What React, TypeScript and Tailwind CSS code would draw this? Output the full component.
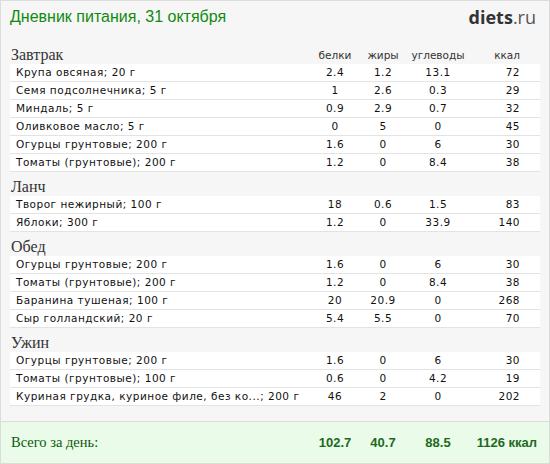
import React from "react";

type Item = { name: string; p: string; f: string; c: string; k: string };

const meals: { title: string; items: Item[] }[] = [
  {
    title: "Завтрак",
    items: [
      { name: "Крупа овсяная; 20 г", p: "2.4", f: "1.2", c: "13.1", k: "72" },
      { name: "Семя подсолнечника; 5 г", p: "1", f: "2.6", c: "0.3", k: "29" },
      { name: "Миндаль; 5 г", p: "0.9", f: "2.9", c: "0.7", k: "32" },
      { name: "Оливковое масло; 5 г", p: "0", f: "5", c: "0", k: "45" },
      { name: "Огурцы грунтовые; 200 г", p: "1.6", f: "0", c: "6", k: "30" },
      { name: "Томаты (грунтовые); 200 г", p: "1.2", f: "0", c: "8.4", k: "38" },
    ],
  },
  {
    title: "Ланч",
    items: [
      { name: "Творог нежирный; 100 г", p: "18", f: "0.6", c: "1.5", k: "83" },
      { name: "Яблоки; 300 г", p: "1.2", f: "0", c: "33.9", k: "140" },
    ],
  },
  {
    title: "Обед",
    items: [
      { name: "Огурцы грунтовые; 200 г", p: "1.6", f: "0", c: "6", k: "30" },
      { name: "Томаты (грунтовые); 200 г", p: "1.2", f: "0", c: "8.4", k: "38" },
      { name: "Баранина тушеная; 100 г", p: "20", f: "20.9", c: "0", k: "268" },
      { name: "Сыр голландский; 20 г", p: "5.4", f: "5.5", c: "0", k: "70" },
    ],
  },
  {
    title: "Ужин",
    items: [
      { name: "Огурцы грунтовые; 200 г", p: "1.6", f: "0", c: "6", k: "30" },
      { name: "Томаты (грунтовые); 100 г", p: "0.6", f: "0", c: "4.2", k: "19" },
      { name: "Куриная грудка, куриное филе, без ко...; 200 г", p: "46", f: "2", c: "0", k: "202" },
    ],
  },
];

const grid = "grid grid-cols-[305px_40px_56px_54px_72px]";

const App = () => {
  return (
    <div className="w-[550px] h-[464px] border border-[#dcdcdc] bg-[#f6f6f6] flex flex-col font-['DejaVu_Sans',sans-serif]">
      <div className="h-[39px] flex justify-between items-start px-[9px] pt-[5px]">
        <h1 className="font-['Liberation_Sans',sans-serif] text-[16px] leading-[22px] text-[#118a11]">
          Дневник питания, 31 октября
        </h1>
        <div className="font-['Open_Sans',sans-serif] text-[18px] leading-[22px] pr-[4px] text-[#333]">
          <span className="font-bold">diets</span>
          <span className="text-[#555]">.ru</span>
        </div>
      </div>

      <div className="px-[9px]">
        {meals.map((meal) => (
          <div key={meal.title}>
            <div className={`${grid} h-[24px] pt-[6px] leading-[18px]`}>
              <div className="font-['Liberation_Serif',serif] text-[16px] text-[#333] pl-[1px]">
                {meal.title}
              </div>
              {meal.title === "Завтрак" && (
                <>
                  <div className="text-[10.5px] text-[#333] text-center">белки</div>
                  <div className="text-[10.5px] text-[#333] text-center">жиры</div>
                  <div className="text-[10.5px] text-[#333] text-center">углеводы</div>
                  <div className="text-[10.5px] text-[#333] text-right pr-[17px]">ккал</div>
                </>
              )}
            </div>
            {meal.items.map((it, i) => (
              <div
                key={i}
                className={`${grid} h-[18px] bg-white border-b border-[#e3e3e3] text-[10.5px] leading-[17px] tracking-[0.5px] text-[#111]`}
              >
                <div className="pl-[6px] whitespace-nowrap">{it.name}</div>
                <div className="text-center">{it.p}</div>
                <div className="text-center">{it.f}</div>
                <div className="text-center">{it.c}</div>
                <div className="text-right pr-[17px]">{it.k}</div>
              </div>
            ))}
          </div>
        ))}
      </div>

      <div className="mt-auto h-[42px] border-t border-[#dcdcdc] bg-[#eafbea] px-[9px] flex items-center">
        <div className={`${grid} w-full items-center`}>
          <div className="font-['Liberation_Serif',serif] text-[14.5px] text-[#0b5a0b] pl-[1px]">
            Всего за день:
          </div>
          <div className="font-['Liberation_Sans',sans-serif] font-bold text-[13px] text-[#1d6a1d] text-center">102.7</div>
          <div className="font-['Liberation_Sans',sans-serif] font-bold text-[13px] text-[#1d6a1d] text-center">40.7</div>
          <div className="font-['Liberation_Sans',sans-serif] font-bold text-[13px] text-[#1d6a1d] text-center">88.5</div>
          <div className="font-['Liberation_Sans',sans-serif] font-bold text-[13px] text-[#1d6a1d] text-right whitespace-nowrap">1126 ккал</div>
        </div>
      </div>
    </div>
  );
};

export default App;
